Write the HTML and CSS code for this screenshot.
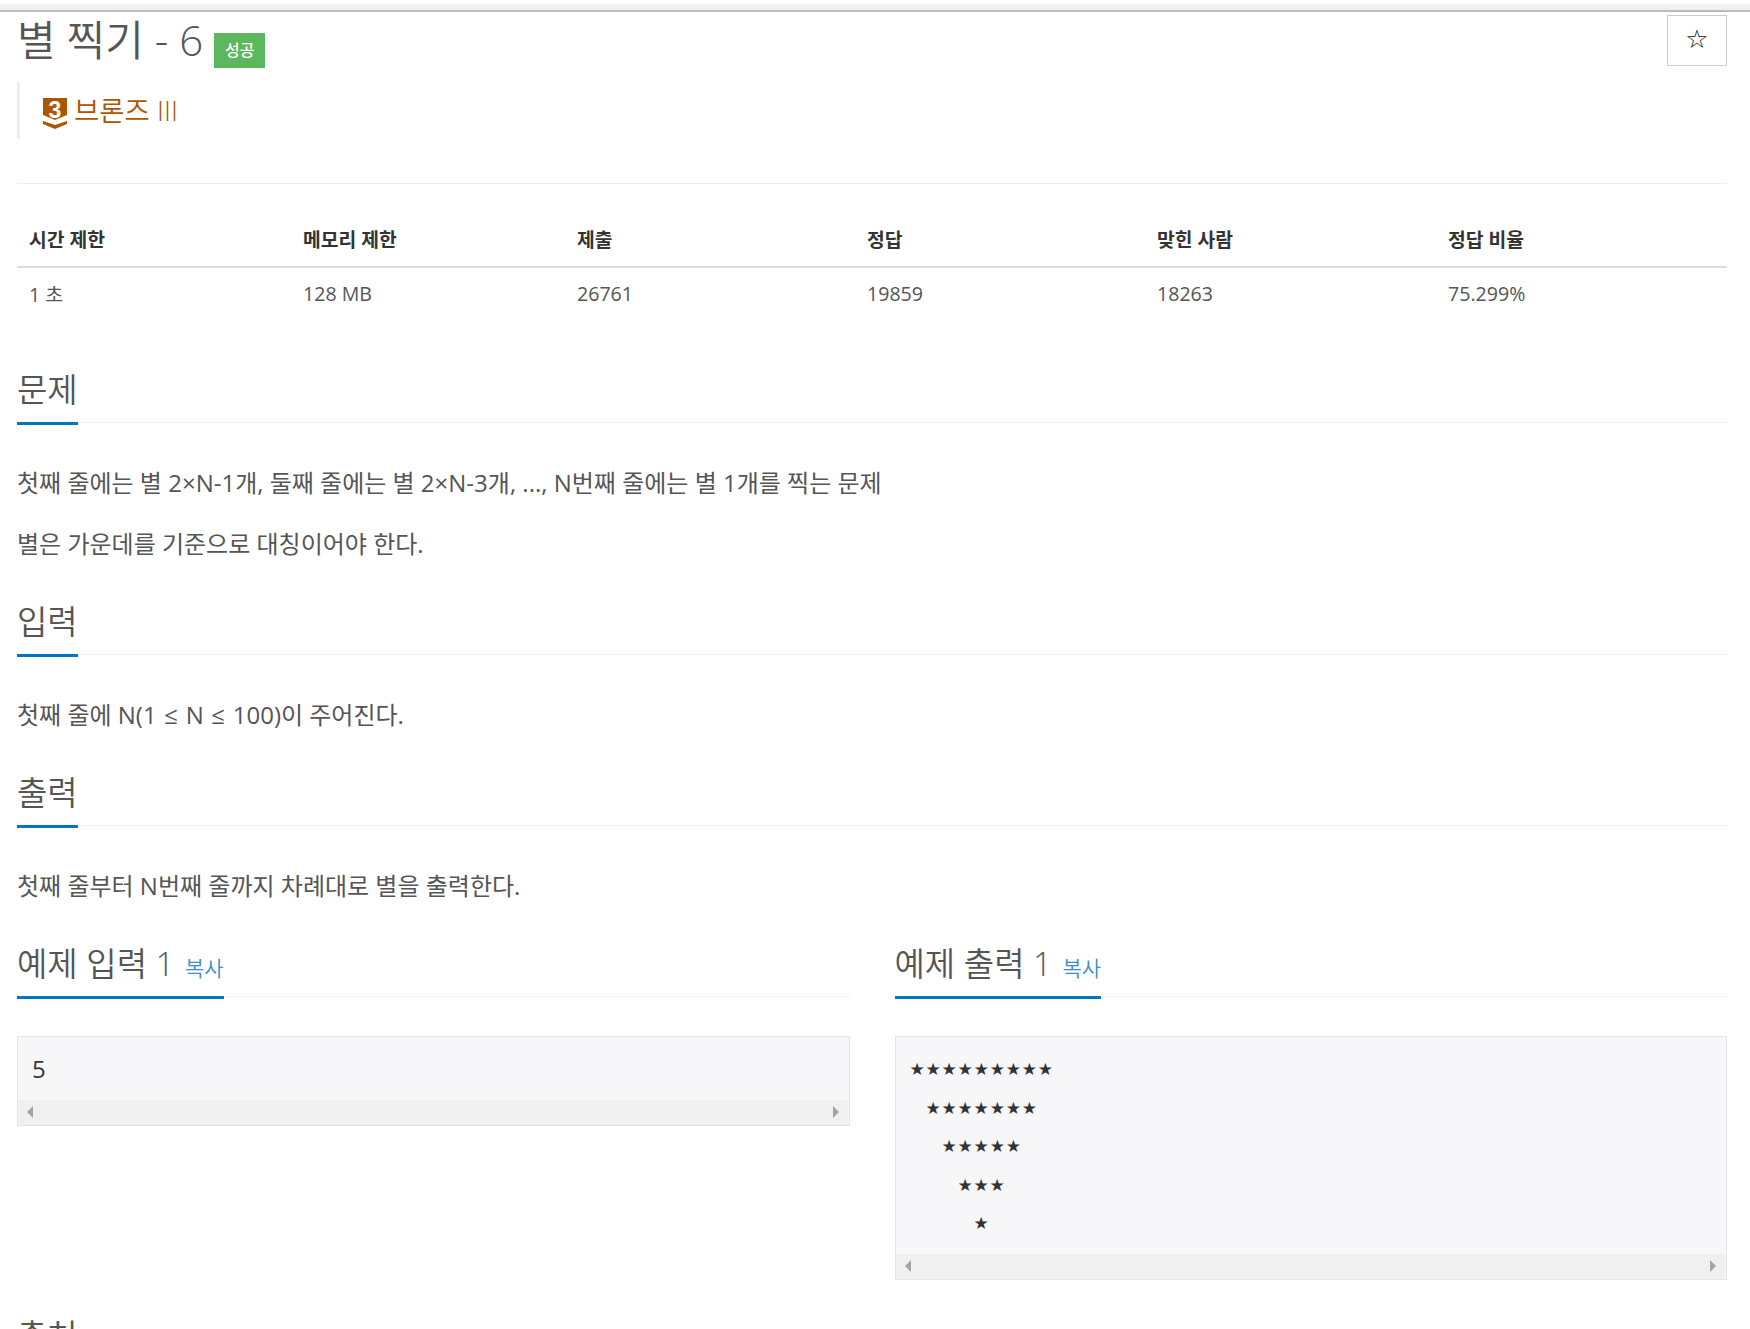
FILE: index.html
```html
<!DOCTYPE html>
<html lang="ko">
<head>
<meta charset="utf-8">
<title>별 찍기 - 6</title>
<link rel="stylesheet" href="styles.css">
</head>
<body>
<div class="topbar"></div>
<main class="page">
  <header class="title-row">
    <h1 class="title"><span>별 찍기 - 6</span><span class="badge">성공</span></h1>
    <button class="star-btn" aria-label="즐겨찾기">☆</button>
  </header>
  <blockquote class="tier">
    <svg class="tier-icon" viewBox="0 0 24 32" width="24" height="32" aria-hidden="true">
      <path d="M0 0H24V17L12 22L0 17Z" fill="#ad5600"/>
      <path d="M0 23L12 27L24 23V26L12 31L0 26Z" fill="#ad5600"/>
      <text x="12" y="20" text-anchor="middle" class="tier-num">3</text>
    </svg>
    <span class="tier-name">브론즈 III</span>
  </blockquote>
  <hr class="rule">
  <table class="stats">
    <thead>
      <tr><th class="c1">시간 제한</th><th class="c2">메모리 제한</th><th class="c3">제출</th><th class="c4">정답</th><th class="c5">맞힌 사람</th><th>정답 비율</th></tr>
    </thead>
    <tbody>
      <tr><td>1 초</td><td>128 MB</td><td>26761</td><td>19859</td><td>18263</td><td>75.299%</td></tr>
    </tbody>
  </table>
  <section class="sec sec-first">
    <h2 class="head"><span class="head-in">문제</span></h2>
    <div class="body">
      <p class="para">첫째 줄에는 별 2×N-1개, 둘째 줄에는 별 2×N-3개, ..., N번째 줄에는 별 1개를 찍는 문제</p>
      <p class="para">별은 가운데를 기준으로 대칭이어야 한다.</p>
    </div>
  </section>
  <section class="sec">
    <h2 class="head"><span class="head-in">입력</span></h2>
    <div class="body"><p class="para">첫째 줄에 N(1 <span class="le">≤</span> N <span class="le">≤</span> 100)이 주어진다.</p></div>
  </section>
  <section class="sec">
    <h2 class="head"><span class="head-in">출력</span></h2>
    <div class="body"><p class="para">첫째 줄부터 N번째 줄까지 차례대로 별을 출력한다.</p></div>
  </section>
  <div class="samples">
    <section class="sample">
      <h2 class="head"><span class="head-in">예제 입력 1 <a class="copy">복사</a></span></h2>
      <div class="pre-box">
        <pre class="pre">5</pre>
        <div class="scroll"><i class="arr arr-l"></i><i class="arr arr-r"></i></div>
      </div>
    </section>
    <section class="sample">
      <h2 class="head"><span class="head-in">예제 출력 1 <a class="copy">복사</a></span></h2>
      <div class="pre-box">
        <pre class="pre pre-stars">★★★★★★★★★
 ★★★★★★★
  ★★★★★
   ★★★
    ★</pre>
        <div class="scroll"><i class="arr arr-l"></i><i class="arr arr-r"></i></div>
      </div>
    </section>
  </div>
  <section class="sec sec-last">
    <h2 class="head"><span class="head-in">출처</span></h2>
  </section>
</main>
</body>
</html>
```
FILE: styles.css
```css
html, body { margin: 0; padding: 0; height: 1329px; overflow: hidden; background: #fff; }
body { font-family: "Open Sans", "Noto Sans CJK KR", sans-serif; color: #555; font-size: 24px; }
.topbar { height: 6px; margin-top: 4px; background: linear-gradient(#f3f3f3, #efefef); border-bottom: 2px solid #bbb; }
.page { padding: 0 23px 0 17px; }
.title-row { display: flex; justify-content: space-between; align-items: flex-start; height: 70px; }
.title { margin: -1px 0 0; display: flex; align-items: flex-start; font-weight: 350; font-size: 42px; line-height: 57px; color: #555; }
.badge { margin: 22px 0 0 11px; width: 51px; height: 35px; background: #5cb85c; color: #fff; font-size: 16px; font-weight: 500; line-height: 35px; text-align: center; }
.star-btn { margin-top: 3px; width: 60px; height: 51px; padding: 0 0 4px; background: #fff; border: 1px solid #ccc; font-size: 26px; line-height: 1; color: #111; font-family: "DejaVu Sans", sans-serif; }
.tier { margin: 0; height: 57px; border-left: 3px solid #eee; padding-left: 23px; display: flex; align-items: center; gap: 7px; }
.tier-icon { flex: none; margin-top: 7px; overflow: visible; }
.tier-num { font: 700 23px "Liberation Sans", sans-serif; fill: #fff; }
.tier-name { font-size: 27.5px; font-weight: 350; color: #ad5600; line-height: 40px; }
.rule { margin: 44px 0 0; border: 0; border-top: 1px solid #eee; }
.stats { width: 100%; margin-top: 25px; border-collapse: collapse; table-layout: fixed; font-size: 19.6px; color: #555; }
.stats th { text-align: left; color: #333; font-weight: 700; font-size: 19.3px; height: 54px; padding: 3px 12px 0; border-bottom: 2px solid #ddd; }
.stats td { height: 51px; padding: 0 12px; }
.c1, .c2 { box-sizing: content-box; width: 250px; }
.c3, .c4 { box-sizing: content-box; width: 266px; }
.c5 { box-sizing: content-box; width: 267px; }
.sec-first { margin-top: 45px; }
.head { margin: 0; border-bottom: 1px dotted #e5e5e5; height: 58px; font-size: 33px; font-weight: 350; line-height: 52px; color: #555; }
.head-in { display: inline-block; height: 58px; border-bottom: 3px solid #0076c0; white-space: nowrap; }
.copy { font-size: 21px; color: #428bca; margin-left: 2px; }
.body { padding: 43px 0 35px; }
.para { margin: 0; font-size: 24px; line-height: 34px; }
.para + .para { margin-top: 27px; }
.le { margin: 0 1.4px; }
.samples { display: grid; grid-template-columns: 1fr 1fr; gap: 45px; }
.sample { min-width: 0; }
.pre-box { margin-top: 39px; border: 1px solid #e3e3e8; background: #f7f7f9; }
.pre { margin: 0; padding: 13px 14px 11px; font: 400 24px/38.5px "Open Sans", sans-serif; color: #333; }
.pre-stars { font: 400 17px/38.5px "DejaVu Sans", sans-serif; letter-spacing: 0.8px; word-spacing: 9.8px; }
.scroll { height: 25px; background: #f0f0f0; margin-right: 1px; display: flex; justify-content: space-between; align-items: center; padding: 0 9px; }
.arr { display: block; width: 0; height: 0; border: 6px solid transparent; }
.arr-l { border-left: 0; border-right: 6px solid #a3a3a3; }
.arr-r { border-right: 0; border-left: 6px solid #a3a3a3; }
.sec-last { margin-top: 30px; }
```
